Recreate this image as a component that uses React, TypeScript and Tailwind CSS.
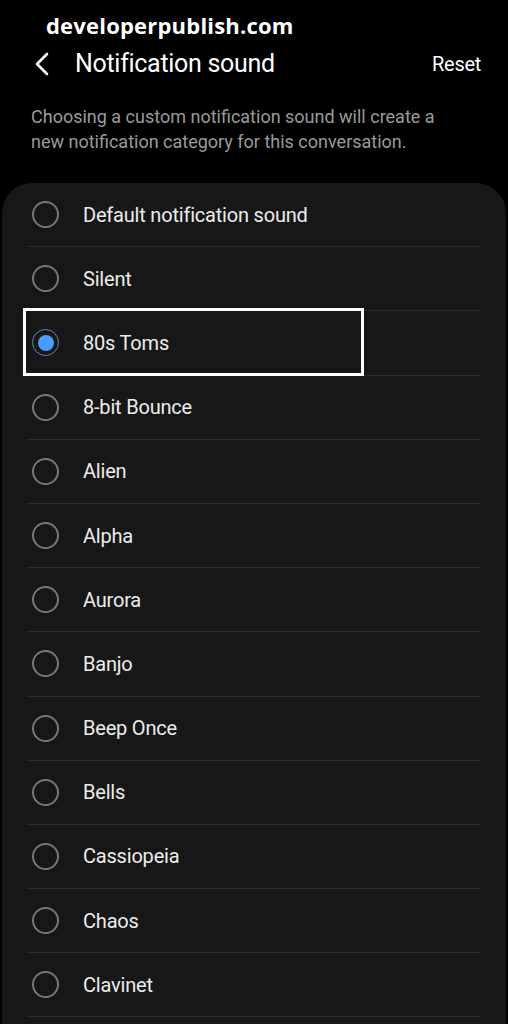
import React from "react";

const items = [
  "Default notification sound",
  "Silent",
  "80s Toms",
  "8-bit Bounce",
  "Alien",
  "Alpha",
  "Aurora",
  "Banjo",
  "Beep Once",
  "Bells",
  "Cassiopeia",
  "Chaos",
  "Clavinet",
];

export default function App() {
  return (
    <div
      className="w-[508px] h-[1024px] bg-black overflow-hidden relative"
      style={{ fontFamily: "Roboto, 'Open Sans', sans-serif" }}
    >
      <div
        className="pt-[11px] pl-[46px] text-white font-bold text-[22px] leading-[28px] tracking-[0.2px]"
        style={{ fontFamily: "'Open Sans', sans-serif" }}
      >
        developerpublish.com
      </div>
      <div className="flex items-center h-[30px] mt-[10px] pl-[34px] pr-[27px]">
        <svg width="17" height="24" viewBox="0 0 17 24" className="mr-[24px]">
          <path d="M13 2 L3 12 L13 22" stroke="white" strokeWidth="2.6" fill="none" strokeLinecap="round" strokeLinejoin="round" />
        </svg>
        <div className="text-white text-[25px] leading-[30px] tracking-[-0.3px]">Notification sound</div>
        <div className="ml-auto text-white text-[20px] leading-[30px] tracking-[-0.3px]">Reset</div>
      </div>
      <div className="pl-[31px] pr-[52px] mt-[25px] text-[#9a9a9a] text-[18px] leading-[25px] tracking-[0px]">
        Choosing a custom notification sound will create a new notification category for this conversation.
      </div>
      <div className="mt-[29px] mx-[2px] bg-[#171717] rounded-[30px] px-[25px] pb-[40px]">
        {items.map((t, i) => (
          <div key={t} className="relative h-[64.2px] flex items-center border-b border-[#2a2a2a]">
            {i === 2 ? (
              <div className="w-[27px] h-[27px] ml-[5px] rounded-full border-[1.5px] border-[#5f86b8] flex items-center justify-center">
                <div className="w-[16px] h-[16px] rounded-full bg-[#4a9bff]" />
              </div>
            ) : (
              <div className="w-[27px] h-[27px] ml-[5px] rounded-full border-2 border-[#777777]" />
            )}
            <div className="ml-[24px] text-[#ececec] text-[20px] leading-[26px] tracking-[-0.2px]">{t}</div>
            {i === 2 && (
              <div className="absolute left-[-4px] top-[-3px] w-[341px] h-[68px] border-[3px] border-white" />
            )}
          </div>
        ))}
      </div>
    </div>
  );
}
